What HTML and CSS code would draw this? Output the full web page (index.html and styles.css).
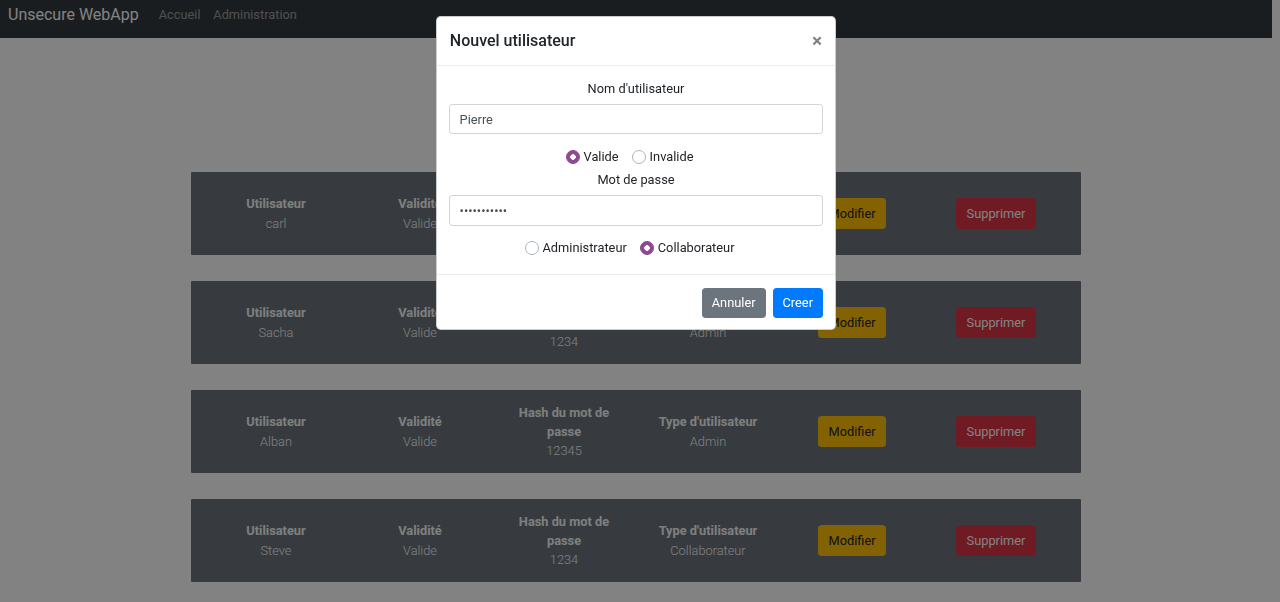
FILE: index.html
```html
<!DOCTYPE html>
<html lang="fr">
<head>
<meta charset="utf-8">
<title>Unsecure WebApp</title>
<link rel="stylesheet" href="styles.css">
</head>
<body>
<nav class="navbar">
  <a class="brand" href="#">Unsecure WebApp</a>
  <a class="nav-link" href="#">Accueil</a>
  <a class="nav-link" href="#">Administration</a>
</nav>

<main class="container">
  <div class="card">
    <div class="col"><div class="head">Utilisateur</div><div class="val">carl</div></div>
    <div class="col"><div class="head">Validité</div><div class="val">Valide</div></div>
    <div class="col"><div class="head">Hash du mot de passe</div><div class="val">1234</div></div>
    <div class="col"><div class="head">Type d'utilisateur</div><div class="val">Admin</div></div>
    <div class="col"><button class="btn btn-warning">Modifier</button></div>
    <div class="col"><button class="btn btn-danger">Supprimer</button></div>
  </div>
  <div class="card">
    <div class="col"><div class="head">Utilisateur</div><div class="val">Sacha</div></div>
    <div class="col"><div class="head">Validité</div><div class="val">Valide</div></div>
    <div class="col"><div class="head">Hash du mot de passe</div><div class="val">1234</div></div>
    <div class="col"><div class="head">Type d'utilisateur</div><div class="val">Admin</div></div>
    <div class="col"><button class="btn btn-warning">Modifier</button></div>
    <div class="col"><button class="btn btn-danger">Supprimer</button></div>
  </div>
  <div class="card">
    <div class="col"><div class="head">Utilisateur</div><div class="val">Alban</div></div>
    <div class="col"><div class="head">Validité</div><div class="val">Valide</div></div>
    <div class="col"><div class="head">Hash du mot de passe</div><div class="val">12345</div></div>
    <div class="col"><div class="head">Type d'utilisateur</div><div class="val">Admin</div></div>
    <div class="col"><button class="btn btn-warning">Modifier</button></div>
    <div class="col"><button class="btn btn-danger">Supprimer</button></div>
  </div>
  <div class="card">
    <div class="col"><div class="head">Utilisateur</div><div class="val">Steve</div></div>
    <div class="col"><div class="head">Validité</div><div class="val">Valide</div></div>
    <div class="col"><div class="head">Hash du mot de passe</div><div class="val">1234</div></div>
    <div class="col"><div class="head">Type d'utilisateur</div><div class="val">Collaborateur</div></div>
    <div class="col"><button class="btn btn-warning">Modifier</button></div>
    <div class="col"><button class="btn btn-danger">Supprimer</button></div>
  </div>
</main>

<div class="backdrop"></div>

<div class="modal">
  <div class="modal-dialog">
    <div class="modal-header">
      <h5 class="modal-title">Nouvel utilisateur</h5>
      <button class="close" type="button">&times;</button>
    </div>
    <div class="modal-body">
      <div class="label">Nom d'utilisateur</div>
      <input class="form-control" type="text" value="Pierre">
      <div class="radios">
        <label class="radio"><span class="dot checked"></span>Valide</label>
        <label class="radio"><span class="dot"></span>Invalide</label>
      </div>
      <div class="label">Mot de passe</div>
      <input class="form-control" type="password" value="abcdefghijk">
      <div class="radios">
        <label class="radio"><span class="dot"></span>Administrateur</label>
        <label class="radio"><span class="dot checked"></span>Collaborateur</label>
      </div>
    </div>
    <div class="modal-footer">
      <button class="btn btn-secondary">Annuler</button>
      <button class="btn btn-primary">Creer</button>
    </div>
  </div>
</div>
</body>
</html>
```

FILE: styles.css
```css
* { box-sizing: border-box; }

html, body {
  margin: 0;
  height: 100%;
}

body {
  padding-right: 8px;
  background: #fff;
  font-family: Roboto, "Liberation Sans", sans-serif;
  font-size: 12.8px;
  line-height: 1.5;
  color: #212529;
  overflow: hidden;
}

.navbar {
  display: flex;
  align-items: flex-start;
  height: 38px;
  padding: 0 8px;
  background: #343a40;
}

.brand {
  font-size: 16px;
  line-height: 30px;
  color: #fff;
  text-decoration: none;
  margin-right: 13.6px;
}

.nav-link {
  font-size: 12.8px;
  line-height: 30px;
  padding: 0 6.4px;
  color: rgba(255, 255, 255, .5);
  text-decoration: none;
}

.container {
  width: 890px;
  margin: 134px auto 0;
  display: flex;
  flex-direction: column;
  gap: 26px;
}

.card {
  display: grid;
  grid-template-columns: repeat(6, 1fr);
  align-items: center;
  padding: 12.8px 13px;
  height: 83px;
  background: #6c757d;
  border-radius: 1px;
  color: #f8f9fa;
  text-align: center;
}

.col {
  padding: 0 12px;
}

.head {
  font-weight: 700;
}

.val {
  font-weight: 300;
}

.btn {
  font-family: inherit;
  font-size: 12.8px;
  line-height: 1.5;
  padding: 4.8px 9.6px;
  border: 1px solid transparent;
  border-radius: 3.2px;
  cursor: pointer;
}

.btn-warning { background: #ffc107; border-color: #ffc107; color: #212529; }
.btn-danger { background: #dc3545; border-color: #dc3545; color: #fff; }
.btn-secondary { background: #6c757d; border-color: #6c757d; color: #fff; }
.btn-primary { background: #007bff; border-color: #007bff; color: #fff; }

.modal-footer .btn {
  padding: 4.3px 9px;
}

.backdrop {
  position: fixed;
  inset: 0;
  background: rgba(0, 0, 0, .49);
  z-index: 10;
}

.modal {
  position: fixed;
  inset: 0;
  padding-right: 8px;
  z-index: 20;
}

.modal-dialog {
  width: 400px;
  margin: 16px auto 0;
  background: #fff;
  border: 1px solid rgba(0, 0, 0, .2);
  border-radius: 4.8px;
}

.modal-header {
  display: flex;
  align-items: center;
  justify-content: space-between;
  padding: 12px 12.8px;
  border-bottom: 1px solid #e9ecef;
}

.modal-title {
  margin: 0;
  font-size: 16px;
  font-weight: 500;
  line-height: 24px;
}

.close {
  padding: 0;
  margin-right: 0;
  background: none;
  border: 0;
  font-family: inherit;
  font-size: 19.2px;
  font-weight: 700;
  line-height: 1;
  color: #000;
  opacity: .5;
}

.modal-body {
  padding: 12.8px 12px;
  display: flex;
  flex-direction: column;
  text-align: center;
}

.label {
  margin-bottom: 6px;
}

.form-control {
  display: block;
  width: 100%;
  height: 30.4px;
  padding: 4.8px 9.6px;
  font-family: inherit;
  font-size: 12.8px;
  line-height: 1.5;
  color: #495057;
  background: #fff;
  border: 1px solid #ced4da;
  border-radius: 3.2px;
}

.radios {
  display: flex;
  justify-content: center;
  margin-top: 12.6px;
  margin-bottom: 4px;
  padding-left: 0;
}

.radio {
  display: inline-flex;
  align-items: center;
  gap: 4px;
  margin-right: 13px;
  line-height: 19.2px;
}

.dot {
  width: 14px;
  height: 14px;
  border-radius: 50%;
  border: 1px solid #adb5bd;
  background: #fff;
}

.dot.checked {
  border-color: #8f4a8f;
  background: #8f4a8f radial-gradient(circle, #fff 0 2.5px, transparent 3px);
}

.modal-footer {
  display: flex;
  justify-content: flex-end;
  gap: 7px;
  padding: 12.8px 12px 11px;
  border-top: 1px solid #e9ecef;
}
```
